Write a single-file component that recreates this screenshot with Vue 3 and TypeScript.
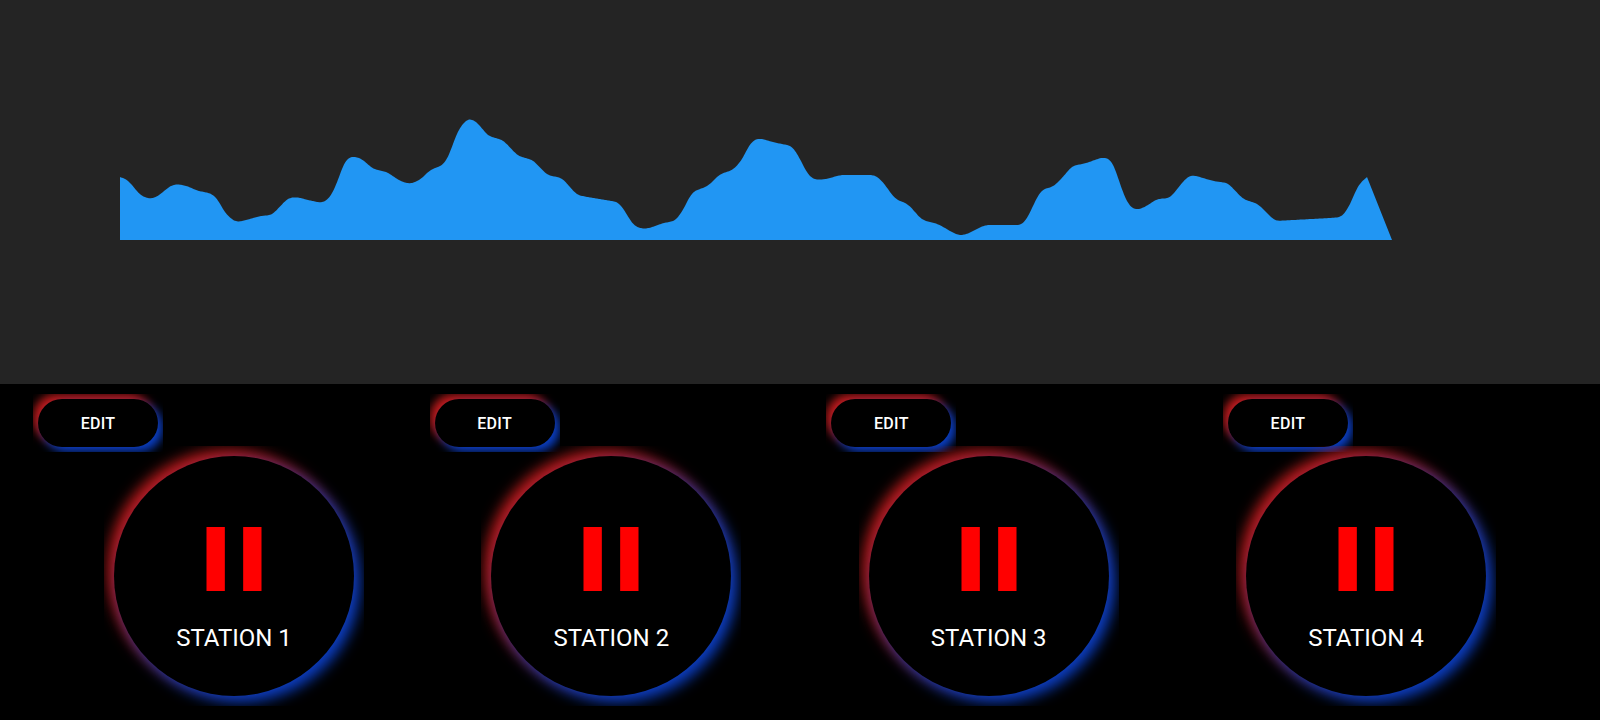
<template>
  <div class="page">
    <div class="chart-panel">
      <svg class="waveform" width="1600" height="384" viewBox="0 0 1600 384">
        <path :d="wavePath" fill="#2196f3" />
      </svg>
    </div>
    <div class="controls">
      <div class="edit-row">
        <div v-for="s in stations" :key="s" class="edit-glow">
          <button class="edit-btn">EDIT</button>
        </div>
      </div>
      <div class="station-row">
        <div v-for="s in stations" :key="s" class="station-glow">
          <div class="station">
            <svg class="pause" width="110" height="110" viewBox="0 0 24 24">
              <path d="M6 19h4V5H6v14zm8-14v14h4V5h-4z" fill="#f00" />
            </svg>
            <span class="station-name">STATION {{ s }}</span>
          </div>
        </div>
      </div>
    </div>
  </div>
</template>

<script setup lang="ts">
const stations: number[] = [1, 2, 3, 4];

// traced outline of the waveform, baseline is y = 240
const points: [number, number][] = [
  [120, 177], [128, 180], [140, 195], [149, 199], [157, 197], [170, 186], [177, 184], [187, 186],
  [198, 191], [210, 193], [217, 198], [225, 213], [235, 222], [243, 221], [260, 216], [272, 215],
  [288, 198], [297, 197], [308, 200], [322, 203], [330, 198], [337, 183], [345, 160], [353, 156],
  [362, 159], [373, 169], [387, 172], [400, 181], [410, 184], [420, 180], [430, 170], [443, 165],
  [448, 158], [458, 130], [468, 118], [477, 122], [488, 136], [503, 140], [518, 156], [533, 160],
  [547, 175], [562, 178], [577, 195], [593, 198], [618, 202], [623, 208], [633, 225], [642, 229],
  [650, 228], [663, 223], [675, 221], [682, 212], [692, 192], [708, 186], [720, 174], [733, 170],
  [742, 160], [750, 143], [758, 138], [777, 143], [792, 146], [798, 155], [808, 175], [815, 180],
  [827, 179], [840, 175], [875, 175], [883, 182], [895, 199], [908, 204], [922, 220], [938, 224],
  [957, 235], [965, 235], [985, 225], [1022, 225], [1028, 217], [1038, 195], [1043, 189], [1053, 187],
  [1062, 178], [1072, 166], [1087, 163], [1097, 159], [1105, 157], [1113, 162], [1118, 178], [1125, 198],
  [1130, 207], [1137, 210], [1145, 207], [1157, 199], [1170, 198], [1178, 188], [1187, 177], [1193, 175],
  [1213, 181], [1228, 183], [1243, 199], [1258, 204], [1275, 221], [1330, 218], [1342, 217], [1350, 205],
  [1358, 185], [1367, 177],
];

// sample the trace per pixel and soften it so the edge has no kinks
const buildPath = (pts: [number, number][]): string => {
  let ys: number[] = [];
  let seg = 0;
  for (let x = pts[0][0]; x <= pts[pts.length - 1][0]; x++) {
    while (seg < pts.length - 2 && x > pts[seg + 1][0]) seg++;
    const [x0, y0] = pts[seg];
    const [x1, y1] = pts[seg + 1];
    ys.push(y0 + ((y1 - y0) * (x - x0)) / (x1 - x0));
  }
  for (let pass = 0; pass < 2; pass++) {
    ys = ys.map((_, i) => {
      const r = Math.min(3, i, ys.length - 1 - i);
      let sum = 0;
      for (let j = i - r; j <= i + r; j++) sum += ys[j];
      return sum / (2 * r + 1);
    });
  }
  const line = ys.map((y, i) => `L${pts[0][0] + i} ${y.toFixed(1)}`).join('');
  return `M120 240${line}L1392 240Z`;
};

const wavePath = buildPath(points);
</script>

<style>
html,
body {
  background: #000;
}
</style>

<style scoped>
.page {
  width: 1600px;
  height: 720px;
  overflow: hidden;
  background: #000;
  font-family: Roboto, "Liberation Sans", sans-serif;
  color: #fff;
}

.chart-panel {
  height: 384px;
  background: #242424;
}

.waveform {
  display: block;
}

.edit-row {
  display: flex;
  gap: 266.67px;
  padding: 10px 0 0 33px;
}

.edit-glow {
  flex: none;
  width: 130px;
  height: 58px;
  padding: 5px;
  box-sizing: border-box;
  overflow: hidden;
}

.edit-btn {
  display: block;
  width: 120px;
  height: 48px;
  padding: 0;
  border: none;
  border-radius: 24px;
  background: #000;
  color: #fff;
  font-family: inherit;
  font-size: 16px;
  font-weight: 500;
  letter-spacing: 0.3px;
  box-shadow: 5px 5px 10px #0b3fc4, -5px -5px 10px #c41c1c;
}

.station-row {
  display: flex;
  justify-content: space-between;
  padding: 0 104px;
  margin-top: -6px;
}

.station-glow {
  flex: none;
  width: 260px;
  height: 260px;
  padding: 10px;
  box-sizing: border-box;
  overflow: hidden;
}

.station {
  width: 240px;
  height: 240px;
  padding-top: 3px;
  box-sizing: border-box;
  border-radius: 50%;
  background: #000;
  display: flex;
  flex-direction: column;
  align-items: center;
  justify-content: center;
  box-shadow: 6px 6px 14px #0b3fc4, -6px -6px 14px #c41c1c;
}

.pause {
  display: block;
  flex: none;
}

.station-name {
  margin-top: 10px;
  font-size: 24px;
  line-height: 28px;
}
</style>
